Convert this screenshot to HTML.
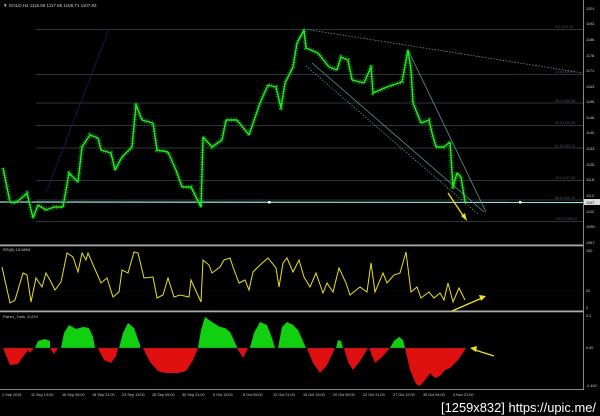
<!DOCTYPE html>
<html><head><meta charset="utf-8"><style>
html,body{margin:0;padding:0;background:#000;width:600px;height:416px;overflow:hidden}
svg{display:block}
text{font-family:"Liberation Sans",sans-serif}
</style></head><body>
<svg width="600" height="416" viewBox="0 0 600 416" xmlns="http://www.w3.org/2000/svg">
<rect width="600" height="416" fill="#000"/>
<text x="3" y="7" font-size="4.5" fill="#ccc">▼ GOLD,H4  1115.59 1117.65 1106.71 1107.83</text>
<g stroke="#3a4a4a" stroke-width="0.8">
<line x1="36" y1="29.5" x2="583" y2="29.5"/>
<line x1="36" y1="74.5" x2="583" y2="74.5"/>
<line x1="36" y1="103" x2="583" y2="103"/>
<line x1="36" y1="125.5" x2="583" y2="125.5"/>
<line x1="36" y1="148" x2="583" y2="148"/>
<line x1="36" y1="180.5" x2="583" y2="180.5"/>
<line x1="36" y1="200" x2="583" y2="200"/>
<line x1="36" y1="221.5" x2="583" y2="221.5"/>
</g>
<g font-size="3.5" fill="#556">
<text x="555" y="28">0.0 1191.22</text>
<text x="555" y="73">23.6 1169.63</text>
<text x="555" y="102">38.2 1155.88</text>
<text x="555" y="124">50.0 1145.83</text>
<text x="555" y="147">61.8 1133.72</text>
<text x="555" y="179">76.4 1117.96</text>
<text x="555" y="199">88.6 1105.19</text>
<text x="555" y="220">100.0 1095.12</text>
</g>
<line x1="46" y1="193" x2="109" y2="29" stroke="#1a1a66" stroke-width="0.8"/>
<line x1="0" y1="202" x2="583" y2="202.5" stroke="#9adede" stroke-width="1.2"/>
<rect x="268" y="201" width="2.5" height="2.5" fill="#fff"/>
<rect x="519" y="201" width="2.5" height="2.5" fill="#fff"/>
<line x1="304" y1="29" x2="583" y2="73" stroke="#5a9a9a" stroke-width="0.8" stroke-dasharray="1.5,1.5"/>
<line x1="409" y1="52" x2="486" y2="212" stroke="#5a9a9a" stroke-width="0.8"/>
<line x1="312" y1="63" x2="484" y2="212" stroke="#5a9a9a" stroke-width="0.8"/>
<line x1="306" y1="66" x2="478" y2="214" stroke="#5a9a9a" stroke-width="0.8" stroke-dasharray="1.5,1.5"/>
<g fill="none" stroke-linejoin="round">
<polyline stroke="#0a8a0a" stroke-width="5" stroke-dasharray="0.8,1.6" points="3,168 10,202 15,203 23,197 27,193 33,218 38,205 46,210 54,207 63,207 69,173 78,182 82,147 90,135 98,138 101,150 111,153 115,170 122,157 132,147 136,105 142,120 153,123 157,150 168,152 176,170 182,187 191,187 201,207 203,137 212,147 222,140 226,120 237,120 249,135 260,103 268,85 276,87 281,108 285,83 293,67 297,43 304,30 306,48 318,53 329,67 337,70 341,57 348,60 352,80 364,83 371,67 373,93 387,87 402,82 408,50 411,70 413,103 421,123 429,120 432,133 436,147 444,147 450,142 453,187 457,173 461,177 465,202"/>
<polyline stroke="#22ee22" stroke-width="1.4" points="3,168 10,202 15,203 23,197 27,193 33,218 38,205 46,210 54,207 63,207 69,173 78,182 82,147 90,135 98,138 101,150 111,153 115,170 122,157 132,147 136,105 142,120 153,123 157,150 168,152 176,170 182,187 191,187 201,207 203,137 212,147 222,140 226,120 237,120 249,135 260,103 268,85 276,87 281,108 285,83 293,67 297,43 304,30 306,48 318,53 329,67 337,70 341,57 348,60 352,80 364,83 371,67 373,93 387,87 402,82 408,50 411,70 413,103 421,123 429,120 432,133 436,147 444,147 450,142 453,187 457,173 461,177 465,202"/>
</g>
<g stroke="#f0e020" stroke-width="1.3" fill="#f0e020">
<line x1="448" y1="193" x2="464" y2="217"/>
<polygon points="467,221 461,216 465,213" stroke="none"/>
</g>
<rect x="0" y="244.5" width="583" height="1.8" fill="#aaa"/>
<rect x="0" y="310.5" width="583" height="1.8" fill="#aaa"/>
<line x1="583.5" y1="0" x2="583.5" y2="390" stroke="#888" stroke-width="1"/>
<line x1="0" y1="389.5" x2="583" y2="389.5" stroke="#888" stroke-width="1"/>
<text x="3" y="251" font-size="4" fill="#ccc">RSI(5) 15.5694</text>
<line x1="0" y1="291" x2="583" y2="291" stroke="#222" stroke-width="0.6" stroke-dasharray="1,1"/>
<polyline fill="none" stroke="#e8e020" stroke-width="1" points="2,267 10,303 15,300 23,273 27,275 31,302 36,278 42,287 46,273 50,280 55,290 61,282 67,253 73,257 78,272 82,253 86,260 88,253 94,267 101,283 107,278 113,297 119,292 122,270 128,273 134,252 138,253 144,278 153,277 157,298 163,295 168,278 174,297 180,295 189,297 191,280 201,302 203,260 209,265 212,273 220,267 224,260 230,258 233,267 239,283 245,280 249,290 253,272 260,265 268,258 276,268 279,287 283,263 287,258 293,272 299,260 304,277 310,287 316,273 323,293 327,283 333,292 339,268 346,283 350,295 360,287 367,292 371,263 375,292 383,273 387,283 394,275 400,273 406,252 411,292 417,287 421,298 429,292 434,298 440,293 444,300 448,283 453,302 459,288 465,300"/>
<g stroke="#f0e020" stroke-width="1.3"><line x1="452" y1="311" x2="482" y2="298"/></g>
<polygon points="486,296 479,295 481,301" fill="#f0e020"/>
<text x="3" y="318" font-size="4" fill="#ccc">Fisher_Yurik -0.219</text>
<g fill="#e01010">
<polygon points="3,348 10,365 18,364 22,358 28,350 30,353 33,349 33,348"/>
<polygon points="50,348 54,354 58,348"/>
<polygon points="98,348 104,360 111,363 116,356 118,348"/>
<polygon points="143,348 150,362 158,371 165,373 178,373 186,371 193,360 198,348"/>
<polygon points="237,348 243,358 248,348"/>
<polygon points="307,348 313,363 320,373 327,365 335,348"/>
<polygon points="344,348 348,362 353,370 360,361 368,348"/>
<polygon points="369,348 375,363 382,357 390,348"/>
<polygon points="405,348 410,370 416,384 420,386 425,380 430,373 435,378 440,376 445,370 450,368 458,360 466,348"/>
</g>
<g fill="#10d010">
<polygon points="35,348 38,341 45,339 50,341 50,348"/>
<polygon points="61,348 64,333 69,325 76,329 83,327 89,328 93,337 95,348"/>
<polygon points="119,348 123,333 128,323 134,328 140,345 140,348"/>
<polygon points="198,348 201,330 205,317 212,322 220,327 225,328 230,332 237,347 237,348"/>
<polygon points="250,348 254,333 260,322 267,325 272,338 275,348"/>
<polygon points="278,348 282,327 287,322 293,325 298,330 306,348"/>
<polygon points="336,348 338,340 341,341 343,348"/>
<polygon points="390,348 394,341 399,337 403,340 405,348"/>
</g>
<line x1="0" y1="348" x2="466" y2="348" stroke="#333" stroke-width="0.4"/>
<g stroke="#f0e020" stroke-width="1.3"><line x1="475" y1="350" x2="494" y2="356"/></g>
<polygon points="470,348 477,346 476,352" fill="#f0e020"/>
<g font-size="3.8" fill="#ccc">
<text x="586" y="10">1201.</text>
<text x="586" y="25">1193.</text>
<text x="586" y="41">1186.</text>
<text x="586" y="57">1178.</text>
<text x="586" y="72">1171.</text>
<text x="586" y="88">1163.</text>
<text x="586" y="103">1155.</text>
<text x="586" y="119">1148.</text>
<text x="586" y="134">1140.</text>
<text x="586" y="150">1133.</text>
<text x="586" y="166">1125.</text>
<text x="586" y="181">1118.</text>
<text x="586" y="197">1110.</text>
<text x="586" y="213">1102.</text>
<text x="586" y="228">1095.</text>
<text x="586" y="244">1087.</text>
<text x="586" y="252">100</text>
<text x="586" y="292">32</text>
<text x="586" y="309">0</text>
<text x="586" y="317">2.1</text>
<text x="586" y="349">0.00</text>
<text x="586" y="387">-2.462</text>
</g>
<rect x="584" y="199" width="16" height="6" fill="#ddd"/>
<text x="586" y="204" font-size="3.8" fill="#000">1107.</text>
<g font-size="3.8" fill="#ccc">
<text x="2" y="396">1 Sep 2015</text>
<text x="31" y="396">11 Sep 13:00</text>
<text x="62" y="396">16 Sep 05:00</text>
<text x="92" y="396">18 Sep 21:00</text>
<text x="122" y="396">23 Sep 13:00</text>
<text x="152" y="396">28 Sep 05:00</text>
<text x="182" y="396">30 Sep 21:00</text>
<text x="213" y="396">5 Oct 13:00</text>
<text x="243" y="396">8 Oct 05:00</text>
<text x="273" y="396">12 Oct 21:00</text>
<text x="303" y="396">15 Oct 13:00</text>
<text x="333" y="396">20 Oct 05:00</text>
<text x="363" y="396">22 Oct 21:00</text>
<text x="393" y="396">27 Oct 12:00</text>
<text x="423" y="396">30 Oct 04:00</text>
<text x="453" y="396">3 Nov 21:00</text>
</g>
<text x="441" y="412" font-size="13" fill="#fff" textLength="155" lengthAdjust="spacingAndGlyphs">[1259x832] https://upic.me/</text>
</svg>
</body></html>
